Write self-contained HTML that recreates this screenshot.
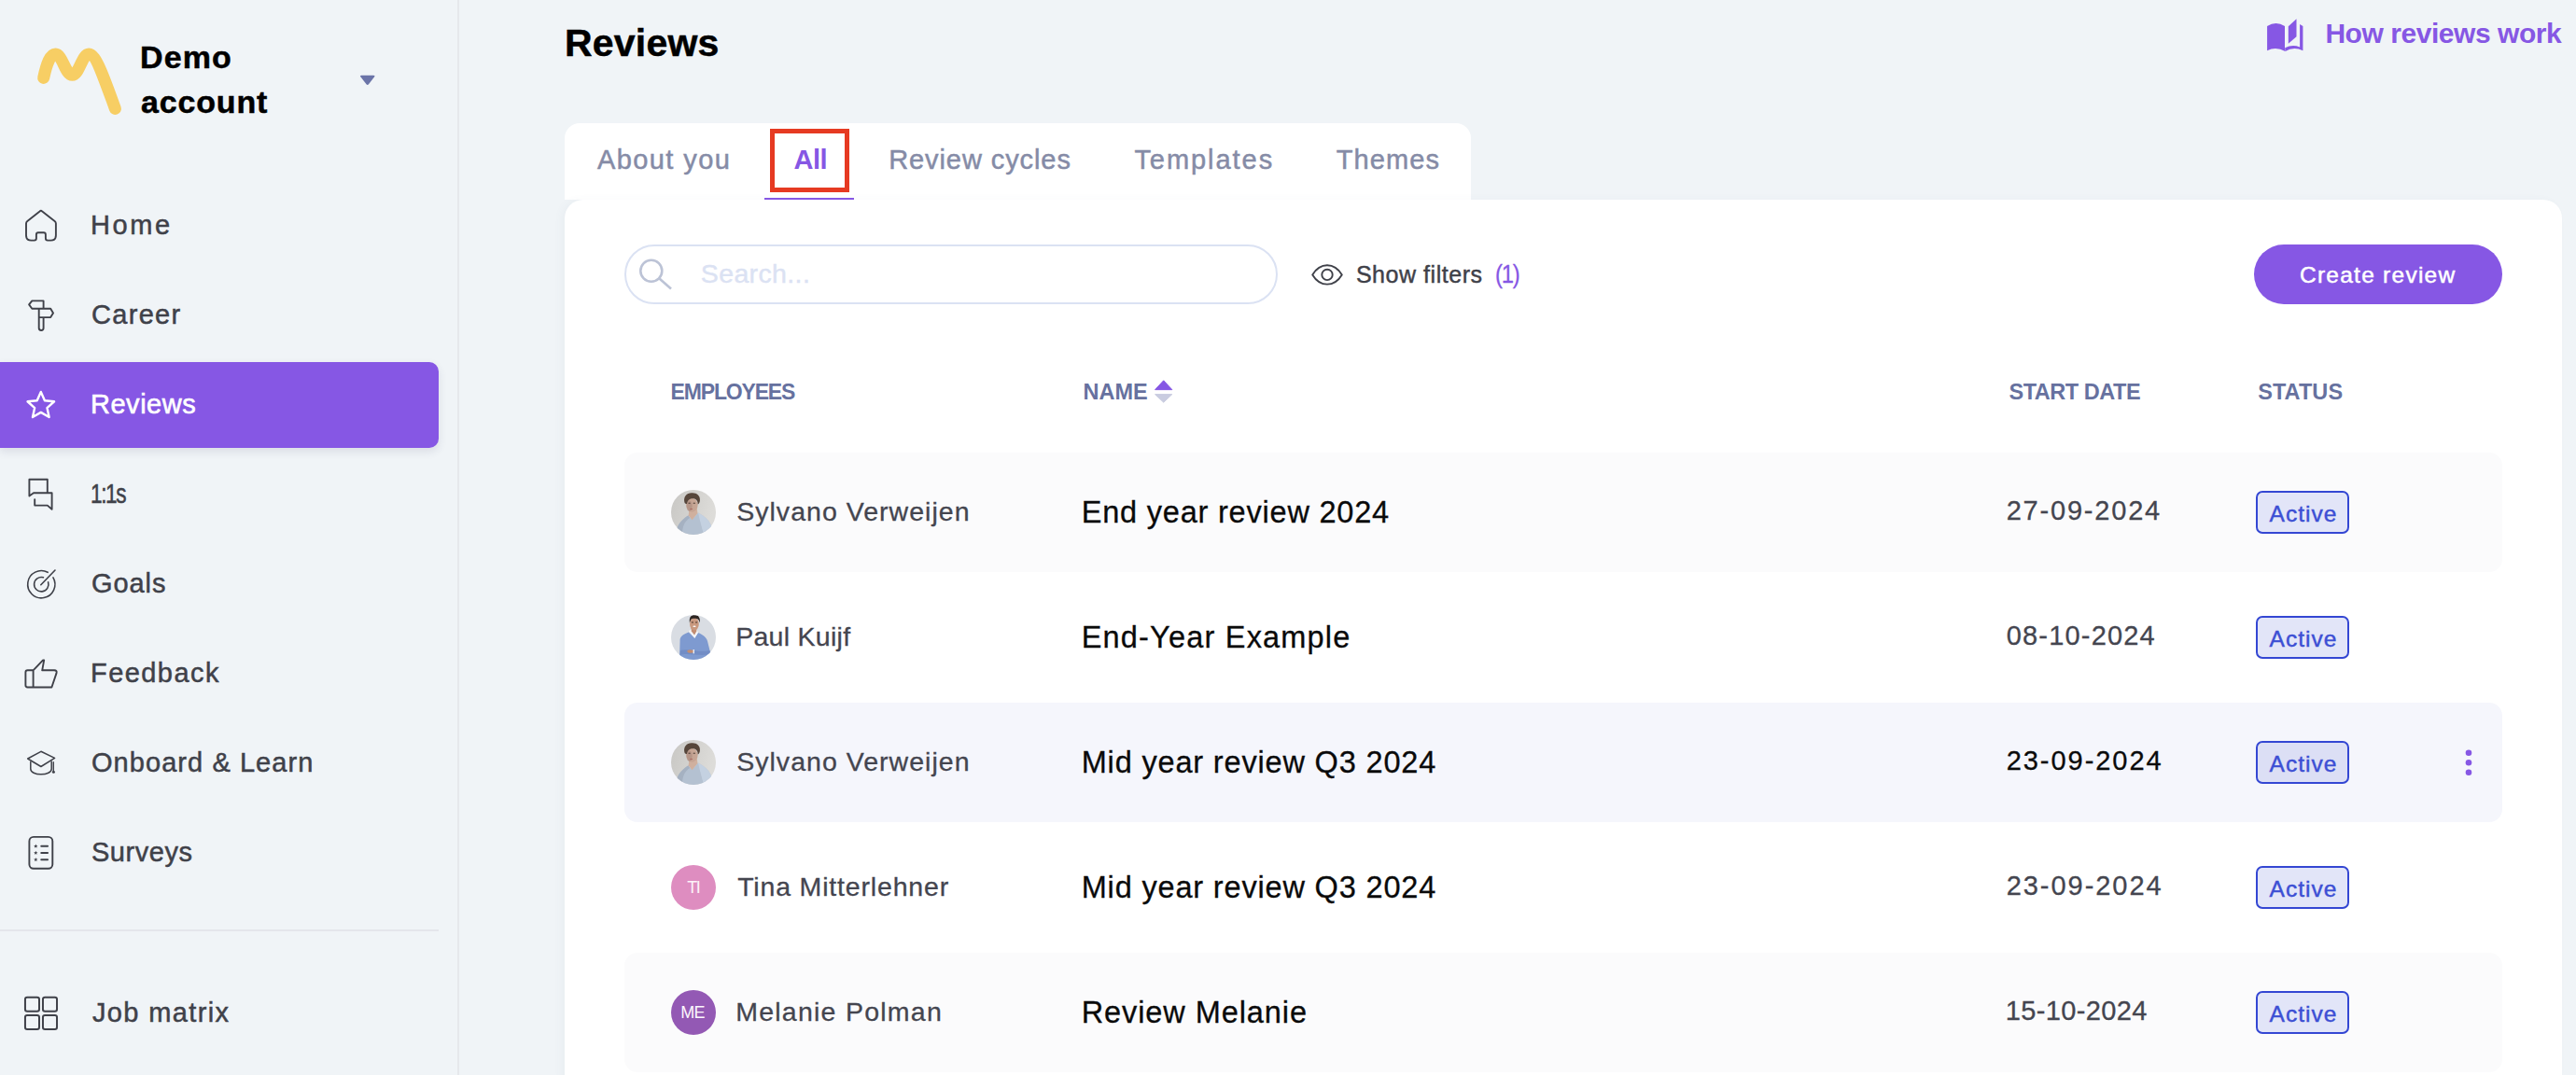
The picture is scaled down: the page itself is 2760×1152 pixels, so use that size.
<!DOCTYPE html>
<html lang="en"><head><meta charset="utf-8"><title>Reviews</title>
<style>
*{box-sizing:border-box;margin:0;padding:0}
html,body{width:2760px;height:1152px;overflow:hidden;background:#f0f4f7;font-family:"Liberation Sans",sans-serif}
body{position:relative}
.abs{position:absolute}
.tx{position:absolute;white-space:pre;line-height:1;display:block}
.sidebar{position:absolute;left:0;top:0;width:492px;height:1152px;border-right:2px solid #e6e8ec}
.active{position:absolute;left:0;top:388px;width:470px;height:92px;background:#8657e4;border-radius:0 10px 10px 0;box-shadow:0 4px 10px rgba(60,60,100,.12)}
.divider{position:absolute;left:0;top:996px;width:470px;height:2px;background:#e4e6eb}
.tabs{position:absolute;left:605px;top:132px;width:971px;height:82px;background:#fff;border-radius:16px 16px 0 0}
.tabline{position:absolute;left:819px;top:211.5px;width:96px;height:2.5px;background:#8657e4}
.redbox{position:absolute;left:825px;top:138px;width:85px;height:68px;border:5px solid #e63a22}
.panel{position:absolute;left:605px;top:214px;width:2140px;height:960px;background:#fff;border-radius:20px;box-shadow:-4px 0 8px rgba(80,90,130,.04)}
.search{position:absolute;left:669px;top:262px;width:700px;height:64px;border:2px solid #dbe2f3;border-radius:32px;background:#fff}
.btn{position:absolute;left:2415px;top:262px;width:266px;height:64px;border-radius:32px;background:#8657e4}
.row{position:absolute;left:669px;width:2012px;height:127.5px;border-radius:14px}
.badge{position:absolute;left:2417px;width:100px;height:46px;border:2px solid #3447d3;background:#e2e5f8;border-radius:7px}
.av{position:absolute;left:719px;width:48px;height:48px;border-radius:50%;overflow:hidden}
svg{position:absolute;overflow:visible}
main{position:absolute;left:0;top:0;width:2760px;height:1152px}

</style></head>
<body>
<aside class="sidebar">
<svg class="abs" style="left:36.0px;top:47.0px" width="98.0" height="80.0" viewBox="36.0 47.0 98.0 80.0"><path d="M 46.7 83.4 C 50 68 54 57.9 59.5 57.9 C 66.5 57.9 70 80.3 77.4 80.3 C 84.8 80.3 88 57.9 95.3 57.9 C 103 57.9 113 88 123.4 116.4" fill="none" stroke="#f7ce64" stroke-width="13" stroke-linejoin="round" stroke-linecap="round" /></svg>
<svg class="abs" style="left:382.0px;top:76.0px" width="24.0" height="19.0" viewBox="382.0 76.0 24.0 19.0"><path d="M 387.3 80.8 H 400.2 Q 402.4 80.8 401 82.6 L 395 90.2 Q 393.75 91.6 392.5 90.2 L 386.5 82.6 Q 385.1 80.8 387.3 80.8 Z" fill="#6b74a8"/></svg>
<svg class="abs" style="left:23.0px;top:221.0px" width="42.0" height="42.0" viewBox="23.0 221.0 42.0 42.0"><path d="M 42.6 226.4 Q 43.9 225.3 45.2 226.4 L 58.6 236.9 Q 59.9 237.9 59.9 239.6 V 252.2 Q 59.9 257.6 54.5 257.6 H 51 Q 48.9 257.6 48.9 255.5 V 251.4 Q 48.9 249.3 46.8 249.3 H 41 Q 38.9 249.3 38.9 251.4 V 255.5 Q 38.9 257.6 36.8 257.6 H 33.4 Q 28 257.6 28 252.2 V 239.6 Q 28 237.9 29.3 236.9 Z" fill="none" stroke="#3f4149" stroke-width="1.9" stroke-linejoin="round" stroke-linecap="round" /></svg>
<svg class="abs" style="left:26.0px;top:317.0px" width="36.0" height="42.0" viewBox="26.0 317.0 36.0 42.0"><path d="M 46.6 322.4 H 34.3 L 31.1 326.4 L 34.3 330.8 H 54.2 L 57 335.5 L 54.2 340.1 H 41.7 M 46.6 322.4 V 330.8 M 41.7 330.8 V 351.5 A 2.45 2.45 0 0 0 46.6 351.5 V 340.1" fill="none" stroke="#3f4149" stroke-width="1.9" stroke-linejoin="round" stroke-linecap="round" /></svg>
<div class="active"></div>
<svg class="abs" style="left:24.0px;top:414.0px" width="40.0" height="39.0" viewBox="24.0 414.0 40.0 39.0"><path d="M 43.80 419.90 L 47.91 429.24 L 58.07 430.26 L 50.46 437.06 L 52.62 447.04 L 43.80 441.90 L 34.98 447.04 L 37.14 437.06 L 29.53 430.26 L 39.69 429.24 Z" fill="none" stroke="#fff" stroke-width="2.4" stroke-linejoin="round" stroke-linecap="round" /></svg>
<svg class="abs" style="left:26.0px;top:509.0px" width="36.0" height="42.0" viewBox="26.0 509.0 36.0 42.0"><path d="M 50.8 528.3 V 513.7 H 31.4 V 531.6 L 36 528.3 H 55.6 V 545.8 L 50.8 541.6 H 37.2 V 535.2" fill="none" stroke="#3f4149" stroke-width="1.9" stroke-linejoin="round" stroke-linecap="round" /></svg>
<svg class="abs" style="left:25.0px;top:606.0px" width="39.0" height="39.0" viewBox="25.0 606.0 39.0 39.0"><path d="M 56.94 618.90 A 14.6 14.6 0 1 1 51.15 613.31" fill="none" stroke="#3f4149" stroke-width="1.6" stroke-linejoin="round" stroke-linecap="round" /><path d="M 51.62 623.82 A 7.7 7.7 0 1 1 46.42 618.80" fill="none" stroke="#3f4149" stroke-width="1.6" stroke-linejoin="round" stroke-linecap="round" /><path d="M 43.8 626.7 L 59 611" fill="none" stroke="#3f4149" stroke-width="1.6" stroke-linejoin="round" stroke-linecap="round" /></svg>
<svg class="abs" style="left:22.0px;top:702.0px" width="44.0" height="40.0" viewBox="22.0 702.0 44.0 40.0"><path d="M 35.6 718.3 L 46.1 707.4 H 47.2 L 45.2 718.3 H 58.2 Q 61.4 718.3 60.5 721.4 L 55.4 736.5 H 29.6 Q 27.4 736.5 27.4 734.3 V 720.5 Q 27.4 718.3 29.6 718.3 H 35.6 V 736.5" fill="none" stroke="#3f4149" stroke-width="1.9" stroke-linejoin="round" stroke-linecap="round" /></svg>
<svg class="abs" style="left:25.0px;top:800.0px" width="39.0" height="35.0" viewBox="25.0 800.0 39.0 35.0"><path d="M 43.9 805.3 L 29.7 813 L 43.9 821.5 L 58.6 812.4 Z" fill="none" stroke="#3f4149" stroke-width="1.5" stroke-linejoin="round" stroke-linecap="round" /><path d="M 32.8 816.4 V 824 C 32.8 827.5 38 829.8 43.9 829.8 C 50 829.8 55.2 827.5 55.2 824 V 815.9" fill="none" stroke="#3f4149" stroke-width="1.5" stroke-linejoin="round" stroke-linecap="round" /><path d="M 57.3 816.8 V 826" fill="none" stroke="#3f4149" stroke-width="1.4" stroke-linejoin="round" stroke-linecap="round" /><circle cx="57.4" cy="827.2" r="1.5" fill="#3f4149"/></svg>
<svg class="abs" style="left:27.0px;top:892.0px" width="34.0" height="44.0" viewBox="27.0 892.0 34.0 44.0"><rect x="31.4" y="896.9" width="24.9" height="33.9" rx="4.5" fill="none" stroke="#3f4149" stroke-width="1.9"/><polygon points="38.30,904.50 38.89,905.99 40.49,906.09 39.25,907.11 39.65,908.66 38.30,907.80 36.95,908.66 37.35,907.11 36.11,906.09 37.71,905.99" fill="#3f4149"/><path d="M 44.3 906.8 H 51" fill="none" stroke="#3f4149" stroke-width="2.1" stroke-linejoin="round" stroke-linecap="round" /><polygon points="38.30,911.70 38.89,913.19 40.49,913.29 39.25,914.31 39.65,915.86 38.30,915.00 36.95,915.86 37.35,914.31 36.11,913.29 37.71,913.19" fill="#3f4149"/><path d="M 44.3 914 H 51" fill="none" stroke="#3f4149" stroke-width="2.1" stroke-linejoin="round" stroke-linecap="round" /><polygon points="38.30,918.90 38.89,920.39 40.49,920.49 39.25,921.51 39.65,923.06 38.30,922.20 36.95,923.06 37.35,921.51 36.11,920.49 37.71,920.39" fill="#3f4149"/><path d="M 44.3 921.2 H 51" fill="none" stroke="#3f4149" stroke-width="2.1" stroke-linejoin="round" stroke-linecap="round" /></svg>
<div class="divider"></div>
<svg class="abs" style="left:22.0px;top:1064.0px" width="44.0" height="44.0" viewBox="22.0 1064.0 44.0 44.0"><rect x="26.95" y="1068.7" width="15.05" height="15.05" rx="2.2" fill="none" stroke="#3f4149" stroke-width="2"/><rect x="26.95" y="1087.9" width="15.05" height="15.05" rx="2.2" fill="none" stroke="#3f4149" stroke-width="2"/><rect x="45.97" y="1068.7" width="15.05" height="15.05" rx="2.2" fill="none" stroke="#3f4149" stroke-width="2"/><rect x="45.97" y="1087.9" width="15.05" height="15.05" rx="2.2" fill="none" stroke="#3f4149" stroke-width="2"/></svg>
<span class="tx" id="t0" style="left:150.00px;top:43.81px;font-size:34px;font-weight:700;color:#000;letter-spacing:1.102px;-webkit-text-stroke:0.5px #000;">Demo</span>
<span class="tx" id="t1" style="left:151.00px;top:92.31px;font-size:34px;font-weight:700;color:#000;letter-spacing:0.828px;-webkit-text-stroke:0.5px #000;">account</span>
<span class="tx" id="t2" style="left:97.00px;top:227.10px;font-size:29px;font-weight:400;color:#3f4149;letter-spacing:2.590px;-webkit-text-stroke:0.5px #3f4149;">Home</span>
<span class="tx" id="t3" style="left:98.00px;top:322.81px;font-size:29px;font-weight:400;color:#3f4149;letter-spacing:1.303px;-webkit-text-stroke:0.5px #3f4149;">Career</span>
<span class="tx" id="t4" style="left:97.00px;top:418.71px;font-size:29px;font-weight:400;color:#fff;letter-spacing:0.519px;-webkit-text-stroke:0.6px #fff;">Reviews</span>
<span class="tx" id="t5" style="left:97.44px;top:514.81px;font-size:29px;font-weight:400;color:#3f4149;letter-spacing:-1.840px;-webkit-text-stroke:0.5px #3f4149;transform:scaleX(0.78);transform-origin:0 0;">1:1s</span>
<span class="tx" id="t6" style="left:98.00px;top:610.71px;font-size:29px;font-weight:400;color:#3f4149;letter-spacing:0.936px;-webkit-text-stroke:0.5px #3f4149;">Goals</span>
<span class="tx" id="t7" style="left:97.00px;top:707.01px;font-size:29px;font-weight:400;color:#3f4149;letter-spacing:1.435px;-webkit-text-stroke:0.5px #3f4149;">Feedback</span>
<span class="tx" id="t8" style="left:98.00px;top:803.31px;font-size:29px;font-weight:400;color:#3f4149;letter-spacing:1.060px;-webkit-text-stroke:0.5px #3f4149;">Onboard &amp; Learn</span>
<span class="tx" id="t9" style="left:98.00px;top:898.81px;font-size:29px;font-weight:400;color:#3f4149;letter-spacing:0.524px;-webkit-text-stroke:0.5px #3f4149;">Surveys</span>
<span class="tx" id="t10" style="left:99.00px;top:1071.21px;font-size:29px;font-weight:400;color:#3f4149;letter-spacing:1.360px;-webkit-text-stroke:0.5px #3f4149;">Job matrix</span>
</aside>
<main>
<svg class="abs" style="left:2428.0px;top:19.0px" width="42.0" height="37.0" viewBox="2428.0 19.0 42.0 37.0"><path d="M 2429.1 27.9 Q 2438.5 22.3 2448 27.9 V 51 L 2448.5 55 Q 2438.5 49.2 2429.1 54.2 Z" fill="#8657e4"/><path d="M 2448.2 51.2 Q 2456 47.4 2464.1 50.4 V 26.1 L 2467.4 27.9 V 54.2 Q 2457.5 49.2 2448.5 55 Z" fill="#8657e4"/><path d="M 2451.8 28.2 L 2460.5 20.2 V 39.2 L 2451.8 46.8 Z" fill="#8657e4"/></svg>
<div class="tabs"></div>
<div class="panel"></div>
<div class="tabline"></div>
<div class="redbox"></div>
<div class="search"></div>
<svg class="abs" style="left:682.0px;top:274.0px" width="42.0" height="40.0" viewBox="682.0 274.0 42.0 40.0"><circle cx="697.8" cy="290.3" r="11.5" fill="none" stroke="#bcc3d6" stroke-width="2.6"/><path d="M 706.2 298.2 L 719 309.5" fill="none" stroke="#bcc3d6" stroke-width="2.6" stroke-linejoin="round" stroke-linecap="butt" /></svg>
<svg class="abs" style="left:1402.0px;top:280.0px" width="40.0" height="29.0" viewBox="1402.0 280.0 40.0 29.0"><path d="M 1406.2 294.4 C 1411 286.5 1416.5 284.2 1422 284.2 C 1427.5 284.2 1433 286.5 1437.8 294.4 C 1433 302.3 1427.5 304.6 1422 304.6 C 1416.5 304.6 1411 302.3 1406.2 294.4 Z" fill="none" stroke="#3f4149" stroke-width="1.9" stroke-linejoin="round" stroke-linecap="round" /><circle cx="1422" cy="294.4" r="5.7" fill="none" stroke="#3f4149" stroke-width="1.9"/></svg>
<div class="btn"></div>
<svg class="abs" style="left:1236.0px;top:406.0px" width="22.0" height="27.0" viewBox="1236.0 406.0 22.0 27.0"><path d="M 1246.7 407.8 L 1255.8 417.6 H 1237.6 Z" fill="#8657e4" stroke="#8657e4" stroke-width="1" stroke-linejoin="round"/><path d="M 1246.7 431.2 L 1255.8 422.6 H 1237.6 Z" fill="#c9cce0" stroke="#c9cce0" stroke-width="1" stroke-linejoin="round"/></svg>
<div class="row" style="top:485.00px;background:#fbfbfc"></div>
<div class="av" style="top:524.75px"><svg width="48" height="48" viewBox="0 0 48 48" style="position:static;display:block"><defs><linearGradient id="gs" x1="0" y1="0" x2="1" y2="0.3"><stop offset="0" stop-color="#c8c7c4"/><stop offset="1" stop-color="#dddcd9"/></linearGradient></defs><rect width="48" height="48" fill="url(#gs)"/><path d="M 5 48 C 6 38 10 33 18.5 27.3 L 22.5 32 L 29 24.4 C 36 28 42 33 43.5 40 L 44 48 Z" fill="#b4c1d1"/><path d="M 29 24.4 C 36 28 42 33 43.5 40 L 44 48 H 35 L 31 33 Z" fill="#c9d6e6" opacity=".75"/><path d="M 5 48 C 6 38 10 33 18.5 27.3 L 20 30 C 14 34 12 40 12 48 Z" fill="#9eaabb" opacity=".7"/><path d="M 19.3 21 L 18.7 27.3 L 22.5 32.2 L 28.5 25 L 27.6 19 Z" fill="#d0b09e"/><ellipse cx="22.4" cy="16.4" rx="6.2" ry="7.3" fill="#c6a594"/><ellipse cx="19.6" cy="17.2" rx="3" ry="5.6" fill="#a4857a" opacity=".5"/><path d="M 14.3 13 C 13.2 7 17 3.1 22 3.3 C 27 2.7 31.6 6 30.9 11.5 C 30.7 13.6 29.6 15.2 28.7 15.6 C 28.9 12 27 9.8 24.5 9.3 C 21 8.8 18 10 16.9 14.9 C 15.5 15.1 14.6 14.4 14.3 13 Z" fill="#56463b"/><ellipse cx="19.6" cy="14.3" rx="1.3" ry=".7" fill="#4a3a33" opacity=".75"/><ellipse cx="24.8" cy="14.3" rx="1.3" ry=".7" fill="#4a3a33" opacity=".75"/><ellipse cx="21.6" cy="20.5" rx="1.6" ry=".7" fill="#a8655e" opacity=".8"/></svg></div>
<div class="badge" style="top:525.85px"></div>
<div class="row" style="top:619.05px;background:#fff"></div>
<div class="av" style="top:658.80px"><svg width="48" height="48" viewBox="0 0 48 48" style="position:static;display:block"><rect width="48" height="48" fill="#d9dde3"/><path d="M 9 48 L 9.6 26 C 10.5 22 14 20.5 18.8 18.4 L 25.3 24.8 L 28.9 19 C 34 21 38 24 39 28 L 42.5 42 L 42 48 Z" fill="#7e9ad0"/><path d="M 10 38 C 18 35 30 41 41.5 38 L 42.3 42 C 30 45 18 40 9.5 43 Z" fill="#6a86be" opacity=".6"/><path d="M 19 17.3 L 21.5 15.3 L 25 19 L 27.5 15.6 L 29 19 L 25.3 25 Z" fill="#f3f5f9"/><path d="M 21.5 13 L 21.8 17.4 L 25 21.6 L 27.3 17.4 L 27.5 13 Z" fill="#c28d72"/><ellipse cx="24.9" cy="9.7" rx="4.9" ry="6.8" fill="#c9997f"/><path d="M 19.9 8.5 C 19.2 3 21 0.2 25 0.3 C 29 -0.1 31.6 2.5 30.8 8.6 C 30.3 6 29.3 4.4 27.5 4.1 C 25 3.6 22.5 3.7 21.3 4.9 C 20.6 5.9 20.4 7.1 19.9 8.5 Z" fill="#2d2521"/><ellipse cx="22.9" cy="7.9" rx="1.2" ry=".6" fill="#3a2a24" opacity=".8"/><ellipse cx="27.1" cy="7.9" rx="1.2" ry=".6" fill="#3a2a24" opacity=".8"/><ellipse cx="25" cy="12.3" rx="1.7" ry=".8" fill="#fff"/><ellipse cx="20.8" cy="39" rx="3.5" ry="1.8" fill="#c28d72"/><rect x="23.6" y="37" width="1.3" height="4.4" fill="#f3f5f9"/></svg></div>
<div class="badge" style="top:659.90px"></div>
<div class="row" style="top:753.10px;background:#f5f6fc"></div>
<div class="av" style="top:792.85px"><svg width="48" height="48" viewBox="0 0 48 48" style="position:static;display:block"><defs><linearGradient id="gs" x1="0" y1="0" x2="1" y2="0.3"><stop offset="0" stop-color="#c8c7c4"/><stop offset="1" stop-color="#dddcd9"/></linearGradient></defs><rect width="48" height="48" fill="url(#gs)"/><path d="M 5 48 C 6 38 10 33 18.5 27.3 L 22.5 32 L 29 24.4 C 36 28 42 33 43.5 40 L 44 48 Z" fill="#b4c1d1"/><path d="M 29 24.4 C 36 28 42 33 43.5 40 L 44 48 H 35 L 31 33 Z" fill="#c9d6e6" opacity=".75"/><path d="M 5 48 C 6 38 10 33 18.5 27.3 L 20 30 C 14 34 12 40 12 48 Z" fill="#9eaabb" opacity=".7"/><path d="M 19.3 21 L 18.7 27.3 L 22.5 32.2 L 28.5 25 L 27.6 19 Z" fill="#d0b09e"/><ellipse cx="22.4" cy="16.4" rx="6.2" ry="7.3" fill="#c6a594"/><ellipse cx="19.6" cy="17.2" rx="3" ry="5.6" fill="#a4857a" opacity=".5"/><path d="M 14.3 13 C 13.2 7 17 3.1 22 3.3 C 27 2.7 31.6 6 30.9 11.5 C 30.7 13.6 29.6 15.2 28.7 15.6 C 28.9 12 27 9.8 24.5 9.3 C 21 8.8 18 10 16.9 14.9 C 15.5 15.1 14.6 14.4 14.3 13 Z" fill="#56463b"/><ellipse cx="19.6" cy="14.3" rx="1.3" ry=".7" fill="#4a3a33" opacity=".75"/><ellipse cx="24.8" cy="14.3" rx="1.3" ry=".7" fill="#4a3a33" opacity=".75"/><ellipse cx="21.6" cy="20.5" rx="1.6" ry=".7" fill="#a8655e" opacity=".8"/></svg></div>
<div class="badge" style="top:793.95px;background:#dcdff5"></div>
<div class="row" style="top:887.15px;background:#fff"></div>
<div class="av" style="top:926.90px;background:#de8dc0"></div>
<div class="badge" style="top:928.00px"></div>
<div class="row" style="top:1021.20px;background:#fbfbfc"></div>
<div class="av" style="top:1060.95px;background:#9359b4"></div>
<div class="badge" style="top:1062.05px"></div>
<svg class="abs" style="left:2640.0px;top:802.0px" width="10.0" height="31.0" viewBox="2640.0 802.0 10.0 31.0"><circle cx="2645" cy="806.8" r="3.3" fill="#8657e4"/><circle cx="2645" cy="817.2" r="3.3" fill="#8657e4"/><circle cx="2645" cy="827.7" r="3.3" fill="#8657e4"/></svg>
<span class="tx" id="t11" style="left:605.00px;top:25.91px;font-size:41px;font-weight:700;color:#000;letter-spacing:0.217px;-webkit-text-stroke:0.5px #000;">Reviews</span>
<span class="tx" id="t12" style="left:2491.40px;top:21.10px;font-size:30px;font-weight:700;color:#8657e4;letter-spacing:-0.454px;">How reviews work</span>
<span class="tx" id="t13" style="left:640.00px;top:157.41px;font-size:29px;font-weight:400;color:#858ba6;letter-spacing:1.404px;-webkit-text-stroke:0.5px #858ba6;">About you</span>
<span class="tx" id="t14" style="left:850.60px;top:157.41px;font-size:29px;font-weight:700;color:#8657e4;letter-spacing:-0.500px;">All</span>
<span class="tx" id="t15" style="left:952.20px;top:157.41px;font-size:29px;font-weight:400;color:#858ba6;letter-spacing:0.916px;-webkit-text-stroke:0.5px #858ba6;">Review cycles</span>
<span class="tx" id="t16" style="left:1215.40px;top:157.41px;font-size:29px;font-weight:400;color:#858ba6;letter-spacing:1.954px;-webkit-text-stroke:0.5px #858ba6;">Templates</span>
<span class="tx" id="t17" style="left:1431.80px;top:157.41px;font-size:29px;font-weight:400;color:#858ba6;letter-spacing:1.109px;-webkit-text-stroke:0.5px #858ba6;">Themes</span>
<span class="tx" id="t18" style="left:750.80px;top:278.90px;font-size:28.5px;font-weight:400;color:#dbe2f3;letter-spacing:0.370px;-webkit-text-stroke:0.4px #dbe2f3;">Search...</span>
<span class="tx" id="t19" style="left:1452.90px;top:282.00px;font-size:25px;font-weight:400;color:#3f4149;letter-spacing:0.544px;-webkit-text-stroke:0.45px #3f4149;">Show filters</span>
<span class="tx" id="t20" style="left:1602.15px;top:280.30px;font-size:28px;font-weight:400;color:#8657e4;letter-spacing:-1.419px;-webkit-text-stroke:0.3px #8657e4;transform:scaleX(0.85);transform-origin:0 0;">(1)</span>
<span class="tx" id="t21" style="left:2464.00px;top:282.90px;font-size:24.5px;font-weight:400;color:#fff;letter-spacing:1.254px;-webkit-text-stroke:0.5px #fff;">Create review</span>
<span class="tx" id="t22" style="left:718.60px;top:408.80px;font-size:23px;font-weight:700;color:#66719f;letter-spacing:-1.175px;">EMPLOYEES</span>
<span class="tx" id="t23" style="left:1160.50px;top:408.81px;font-size:23.5px;font-weight:700;color:#66719f;letter-spacing:-0.006px;">NAME</span>
<span class="tx" id="t24" style="left:2152.50px;top:408.81px;font-size:23.5px;font-weight:700;color:#66719f;letter-spacing:-0.463px;">START DATE</span>
<span class="tx" id="t25" style="left:2419.20px;top:408.81px;font-size:23.5px;font-weight:700;color:#66719f;letter-spacing:0.073px;">STATUS</span>
<span class="tx" id="t26" style="left:789.20px;top:533.81px;font-size:28.5px;font-weight:400;color:#44454f;letter-spacing:1.029px;-webkit-text-stroke:0.3px #44454f;">Sylvano Verweijen</span>
<span class="tx" id="t27" style="left:1158.70px;top:532.81px;font-size:32.5px;font-weight:400;color:#0a0a0a;letter-spacing:0.796px;-webkit-text-stroke:0.3px #0a0a0a;">End year review 2024</span>
<span class="tx" id="t28" style="left:2149.70px;top:533.21px;font-size:29px;font-weight:400;color:#44454f;letter-spacing:1.799px;-webkit-text-stroke:0.3px #44454f;">27-09-2024</span>
<span class="tx" id="t29" style="left:2431.60px;top:538.76px;font-size:24.5px;font-weight:400;color:#3c4fd4;letter-spacing:1.002px;-webkit-text-stroke:0.45px #3c4fd4;">Active</span>
<span class="tx" id="t30" style="left:788.20px;top:667.85px;font-size:28.5px;font-weight:400;color:#44454f;letter-spacing:0.280px;-webkit-text-stroke:0.3px #44454f;">Paul Kuijf</span>
<span class="tx" id="t31" style="left:1158.70px;top:666.86px;font-size:32.5px;font-weight:400;color:#0a0a0a;letter-spacing:1.192px;-webkit-text-stroke:0.3px #0a0a0a;">End-Year Example</span>
<span class="tx" id="t32" style="left:2149.70px;top:667.26px;font-size:29px;font-weight:400;color:#44454f;letter-spacing:1.187px;-webkit-text-stroke:0.3px #44454f;">08-10-2024</span>
<span class="tx" id="t33" style="left:2431.60px;top:672.80px;font-size:24.5px;font-weight:400;color:#3c4fd4;letter-spacing:1.002px;-webkit-text-stroke:0.45px #3c4fd4;">Active</span>
<span class="tx" id="t34" style="left:789.20px;top:801.90px;font-size:28.5px;font-weight:400;color:#44454f;letter-spacing:1.029px;-webkit-text-stroke:0.3px #44454f;">Sylvano Verweijen</span>
<span class="tx" id="t35" style="left:1158.70px;top:800.91px;font-size:32.5px;font-weight:400;color:#0a0a0a;letter-spacing:0.832px;-webkit-text-stroke:0.3px #0a0a0a;">Mid year review Q3 2024</span>
<span class="tx" id="t36" style="left:2149.70px;top:801.31px;font-size:29px;font-weight:400;color:#0a0a0a;letter-spacing:1.954px;-webkit-text-stroke:0.3px #0a0a0a;">23-09-2024</span>
<span class="tx" id="t37" style="left:2431.60px;top:806.85px;font-size:24.5px;font-weight:400;color:#3c4fd4;letter-spacing:1.002px;-webkit-text-stroke:0.45px #3c4fd4;">Active</span>
<span class="tx" id="t38" style="left:790.20px;top:935.96px;font-size:28.5px;font-weight:400;color:#44454f;letter-spacing:0.826px;-webkit-text-stroke:0.3px #44454f;">Tina Mitterlehner</span>
<span class="tx" id="t39" style="left:1158.70px;top:934.96px;font-size:32.5px;font-weight:400;color:#0a0a0a;letter-spacing:0.832px;-webkit-text-stroke:0.3px #0a0a0a;">Mid year review Q3 2024</span>
<span class="tx" id="t40" style="left:2149.70px;top:935.35px;font-size:29px;font-weight:400;color:#44454f;letter-spacing:1.954px;-webkit-text-stroke:0.3px #44454f;">23-09-2024</span>
<span class="tx" id="t41" style="left:2431.60px;top:940.91px;font-size:24.5px;font-weight:400;color:#3c4fd4;letter-spacing:1.002px;-webkit-text-stroke:0.45px #3c4fd4;">Active</span>
<span class="tx" id="t42" style="left:788.20px;top:1070.01px;font-size:28.5px;font-weight:400;color:#44454f;letter-spacing:1.246px;-webkit-text-stroke:0.3px #44454f;">Melanie Polman</span>
<span class="tx" id="t43" style="left:1158.70px;top:1069.02px;font-size:32.5px;font-weight:400;color:#0a0a0a;letter-spacing:0.913px;-webkit-text-stroke:0.3px #0a0a0a;">Review Melanie</span>
<span class="tx" id="t44" style="left:2148.70px;top:1069.41px;font-size:29px;font-weight:400;color:#44454f;letter-spacing:0.376px;-webkit-text-stroke:0.3px #44454f;">15-10-2024</span>
<span class="tx" id="t45" style="left:2431.60px;top:1074.96px;font-size:24.5px;font-weight:400;color:#3c4fd4;letter-spacing:1.002px;-webkit-text-stroke:0.45px #3c4fd4;">Active</span>
<span class="tx" id="t46" style="left:736.20px;top:941.76px;font-size:18px;font-weight:400;color:#fdf3f9;letter-spacing:-1.395px;">TI</span>
<span class="tx" id="t47" style="left:729.20px;top:1076.01px;font-size:18px;font-weight:400;color:#fbf6fd;letter-spacing:-0.594px;">ME</span>
</main>
</body></html>
